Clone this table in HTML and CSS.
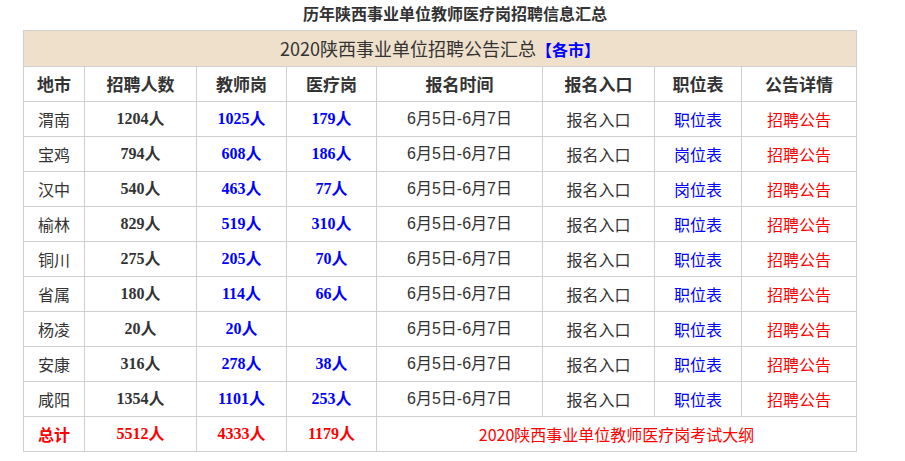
FILE: index.html
```html
<!DOCTYPE html>
<html lang="zh-CN">
<head>
<meta charset="utf-8">
<title>历年陕西事业单位教师医疗岗招聘信息汇总</title>
<link rel="stylesheet" href="styles.css">
</head>
<body>
<div class="wrap">
  <h1 class="page-title">历年陕西事业单位教师医疗岗招聘信息汇总</h1>
  <table class="summary">
    <colgroup>
      <col class="c1"><col class="c2"><col class="c3"><col class="c4"><col class="c5"><col class="c6"><col class="c7"><col class="c8">
    </colgroup>
    <thead>
      <tr class="banner"><th colspan="8">2020陕西事业单位招聘公告汇总<span class="blue">【各市】</span></th></tr>
      <tr class="heads"><th>地市</th><th>招聘人数</th><th>教师岗</th><th>医疗岗</th><th>报名时间</th><th>报名入口</th><th>职位表</th><th>公告详情</th></tr>
    </thead>
    <tbody>
      <tr><td>渭南</td><td class="num">1204人</td><td class="num blue">1025人</td><td class="num blue">179人</td><td class="date">6月5日-6月7日</td><td>报名入口</td><td class="blue">职位表</td><td class="red">招聘公告</td></tr>
      <tr><td>宝鸡</td><td class="num">794人</td><td class="num blue">608人</td><td class="num blue">186人</td><td class="date">6月5日-6月7日</td><td>报名入口</td><td class="blue">岗位表</td><td class="red">招聘公告</td></tr>
      <tr><td>汉中</td><td class="num">540人</td><td class="num blue">463人</td><td class="num blue">77人</td><td class="date">6月5日-6月7日</td><td>报名入口</td><td class="blue">岗位表</td><td class="red">招聘公告</td></tr>
      <tr><td>榆林</td><td class="num">829人</td><td class="num blue">519人</td><td class="num blue">310人</td><td class="date">6月5日-6月7日</td><td>报名入口</td><td class="blue">职位表</td><td class="red">招聘公告</td></tr>
      <tr><td>铜川</td><td class="num">275人</td><td class="num blue">205人</td><td class="num blue">70人</td><td class="date">6月5日-6月7日</td><td>报名入口</td><td class="blue">职位表</td><td class="red">招聘公告</td></tr>
      <tr><td>省属</td><td class="num">180人</td><td class="num blue">114人</td><td class="num blue">66人</td><td class="date">6月5日-6月7日</td><td>报名入口</td><td class="blue">职位表</td><td class="red">招聘公告</td></tr>
      <tr><td>杨凌</td><td class="num">20人</td><td class="num blue">20人</td><td class="num blue"></td><td class="date">6月5日-6月7日</td><td>报名入口</td><td class="blue">职位表</td><td class="red">招聘公告</td></tr>
      <tr><td>安康</td><td class="num">316人</td><td class="num blue">278人</td><td class="num blue">38人</td><td class="date">6月5日-6月7日</td><td>报名入口</td><td class="blue">职位表</td><td class="red">招聘公告</td></tr>
      <tr><td>咸阳</td><td class="num">1354人</td><td class="num blue">1101人</td><td class="num blue">253人</td><td class="date">6月5日-6月7日</td><td>报名入口</td><td class="blue">职位表</td><td class="red">招聘公告</td></tr>
      <tr class="total"><td class="red strong">总计</td><td class="num red">5512人</td><td class="num red">4333人</td><td class="num red">1179人</td><td colspan="4" class="red">2020陕西事业单位教师医疗岗考试大纲</td></tr>
    </tbody>
  </table>
</div>
</body>
</html>
```
FILE: styles.css
```css
html, body {
  margin: 0;
  padding: 0;
  background: #fff;
}
body {
  font-family: "Noto Sans CJK SC", "Liberation Sans", sans-serif;
  color: #333;
}
.wrap {
  padding-left: 23px;
}
.page-title {
  width: 864px;
  margin: 0;
  height: 30px;
  line-height: 26px;
  font-size: 16px;
  font-weight: bold;
  text-align: center;
  color: #333;
}
.summary {
  border-collapse: collapse;
  table-layout: fixed;
  width: 833px;
  border: 1px solid #cfcfcf;
}
.c1 { width: 61px; }
.c2 { width: 112px; }
.c3 { width: 90px; }
.c4 { width: 90px; }
.c5 { width: 166px; }
.c6 { width: 112px; }
.c7 { width: 87px; }
.c8 { width: 115px; }
.summary th, .summary td {
  border: 1px solid #cfcfcf;
  text-align: center;
  padding: 0;
  height: 34px;
  font-size: 16px;
  line-height: 20px;
}
.banner th {
  background: #eee0cb;
  font-size: 18px;
  font-weight: normal;
  height: 35px;
  color: #333;
}
.heads th {
  font-weight: bold;
  font-size: 17px;
  color: #333;
}
.num {
  font-family: "Liberation Serif", "Noto Sans CJK SC", serif;
  font-weight: bold;
  font-size: 18px;
}
.date {
  font-family: "Liberation Sans", "Noto Sans CJK SC", sans-serif;
}
.blue { color: #0000ff; }
.red { color: #ff0000; }
.strong { font-weight: bold; }
.banner .blue { font-weight: bold; font-size: 16px; }
```
